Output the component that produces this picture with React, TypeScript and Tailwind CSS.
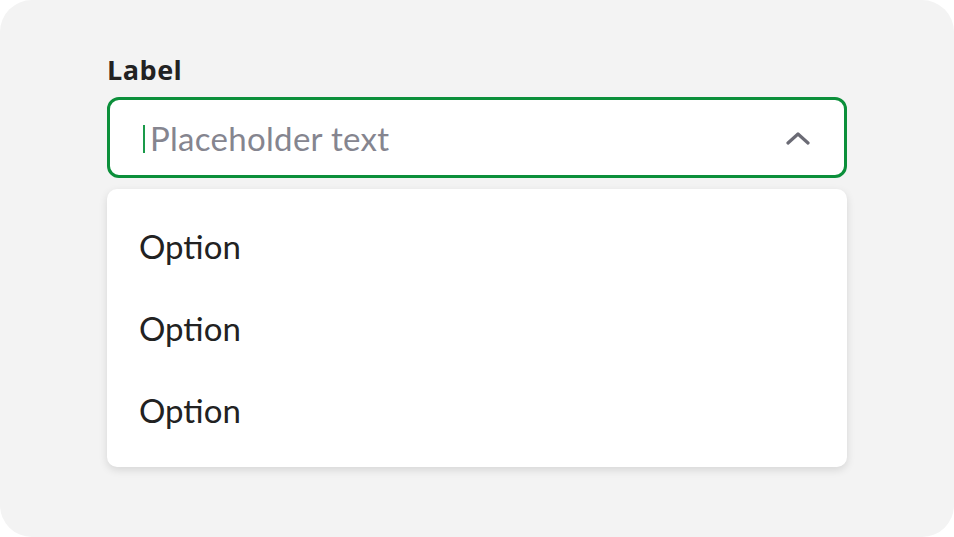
import React from "react";

const options = ["Option", "Option", "Option"];

const App = () => {
  return (
    <div className="w-[954px] h-[537px] bg-white" style={{ fontFamily: "Lato, 'Noto Sans', sans-serif" }}>
      <div className="w-full h-full rounded-[32px] bg-[#f3f3f3] pt-[54px] pl-[107px]">
        <div className="w-[740px]">
          <p
            className="text-[27px] font-bold text-[#222222] leading-[32px] mb-[11px] tracking-[0.5px]"
            style={{ fontFamily: "'Open Sans', sans-serif" }}
          >
            Label
          </p>
          <div className="h-[81px] rounded-[12px] border-[3px] border-[#0b8f3a] bg-white flex items-center pl-[33px] pr-[34px]">
            <span className="w-[2px] h-[28px] bg-[#1a9a4a] mr-[5px] mt-[2px]" />
            <span className="flex-1 text-[33px] leading-[40px] tracking-[0.3px] text-[#85858f]">Placeholder text</span>
            <svg width="24" height="14" viewBox="0 0 24 14" fill="none">
              <path d="M2 12L12 3L22 12" stroke="#6b6b75" strokeWidth="3.2" strokeLinecap="round" strokeLinejoin="round" />
            </svg>
          </div>
          <div className="mt-[11px] h-[278px] rounded-[10px] bg-white shadow-[0_3px_8px_rgba(0,0,0,0.12)] flex flex-col pt-[16px]">
            {options.map((o, i) => (
              <div key={i} className="h-[82px] flex items-center pl-[32px] text-[33px] leading-[40px] text-[#222222]">
                {o}
              </div>
            ))}
          </div>
        </div>
      </div>
    </div>
  );
};

export default App;
